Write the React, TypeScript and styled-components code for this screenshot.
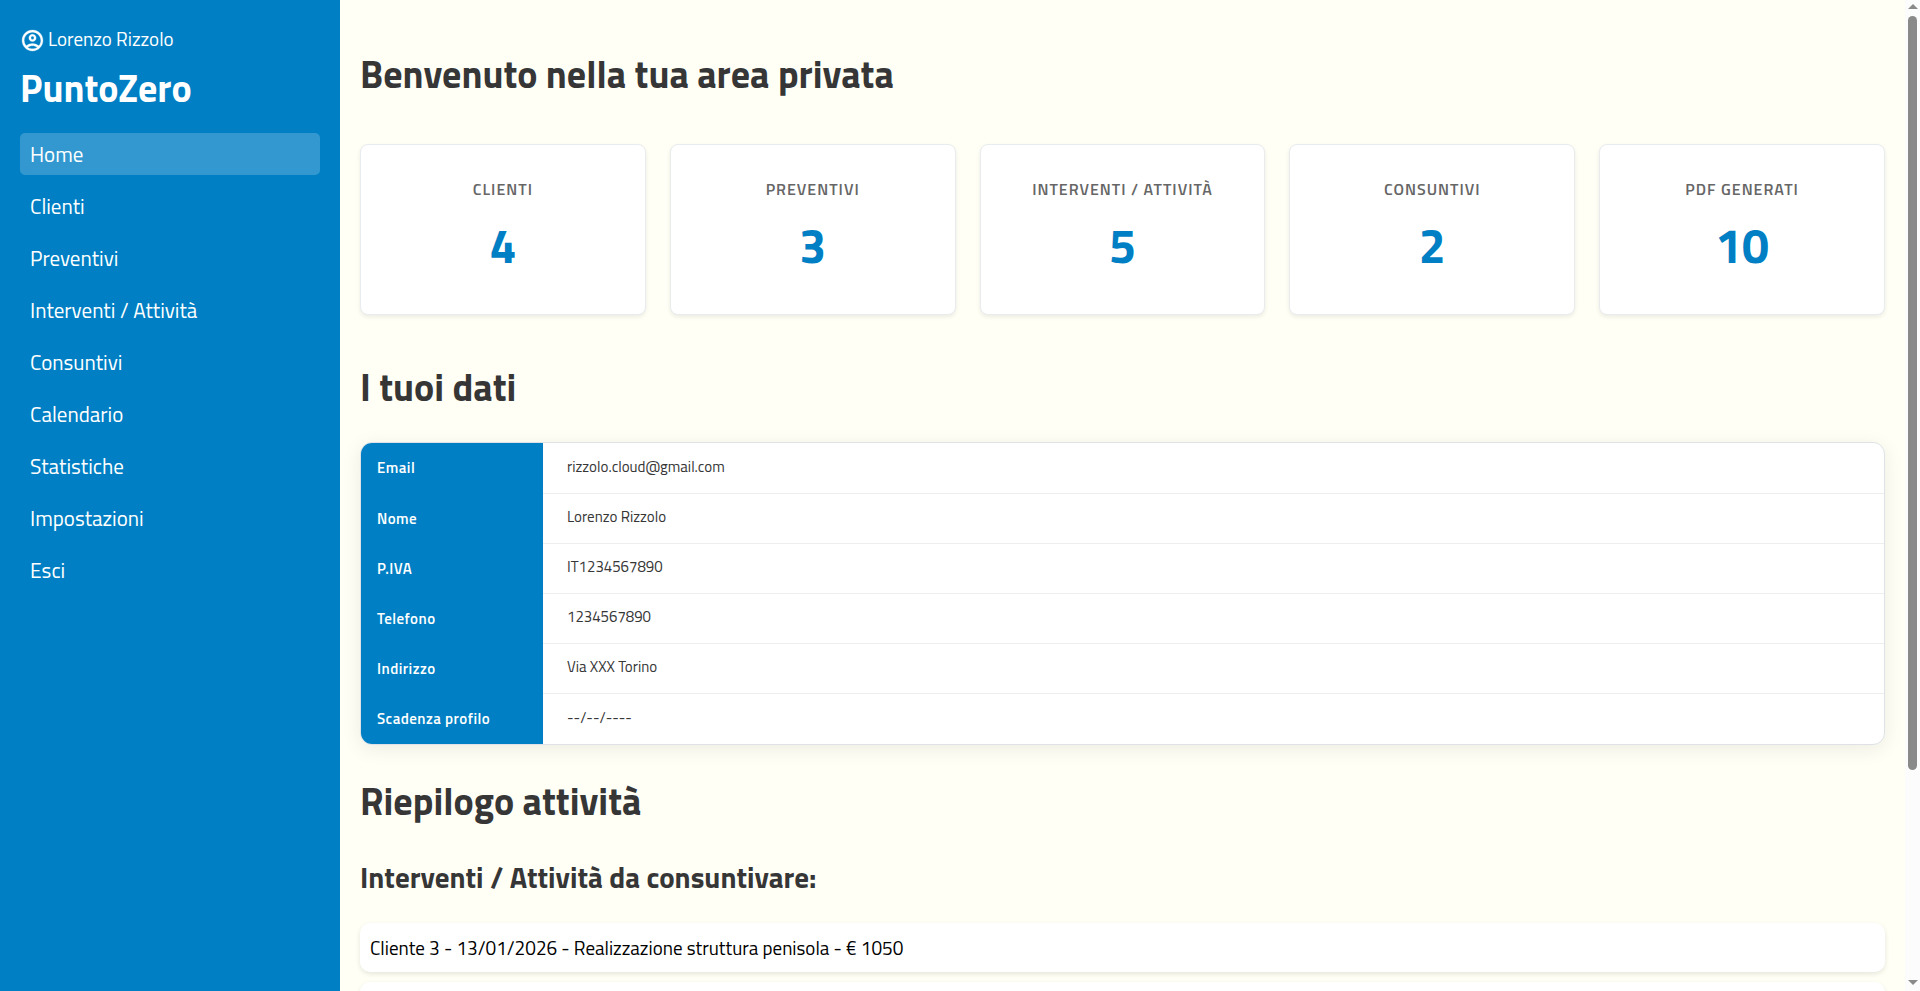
import React from "react";
import styled, { createGlobalStyle } from "styled-components";
import { MdOutlineAccountCircle } from "react-icons/md";

const GlobalStyle = createGlobalStyle`
  *, *::before, *::after { box-sizing: border-box; }
  body {
    margin: 0;
    background: #fffff6;
    color: #363636;
    font-family: "Titillium Web", Roboto, "Liberation Sans", sans-serif;
  }
`;

const Page = styled.div`
  display: grid;
  grid-template-columns: 340px minmax(0, 1fr) 15px;
  height: 100vh;
  overflow: hidden;
`;

const Sidebar = styled.aside`
  padding: 24px 20px;
  background: #007fc4;
  color: #fff;
`;

const User = styled.div`
  display: flex;
  align-items: center;
  gap: 3px;
  font-size: 19px;
  line-height: 30px;
`;

const UserIcon = styled(MdOutlineAccountCircle)`
  width: 25px;
  height: 25px;
  margin-top: 2px;

  path:not([fill="none"]) {
    stroke: currentColor;
    stroke-width: 0.3;
  }
`;

const Brand = styled.div`
  margin: 5px 0 16px;
  font-size: 38px;
  font-weight: 700;
  line-height: 58px;
`;

const Nav = styled.nav`
  display: flex;
  flex-direction: column;
  gap: 10px;
`;

const NavLink = styled.a<{ $active?: boolean }>`
  padding: 5px 10px;
  border-radius: 5px;
  background: ${(p) => (p.$active ? "rgba(255, 255, 255, 0.2)" : "transparent")};
  color: #fff;
  font-size: 21px;
  line-height: 32px;
  text-decoration: none;
`;

const Main = styled.main`
  min-width: 0;
  padding: 45px 20px 20px;
  overflow: hidden;
`;

const Title = styled.h1`
  margin: 0 0 41px;
  font-size: 38px;
  line-height: 58px;
`;

const SectionTitle = styled.h2`
  margin: 0 0 26px;
  font-size: 38px;
  line-height: 58px;
`;

const SubTitle = styled.h3`
  margin: 0 0 25px;
  font-size: 29px;
  line-height: 42px;
`;

const Cards = styled.div`
  display: grid;
  grid-template-columns: repeat(5, minmax(0, 1fr));
  gap: 24px;
  margin-bottom: 43px;
`;

const Card = styled.section`
  padding: 32px;
  border: 1px solid #e9ecef;
  border-radius: 8px;
  background: #fff;
  box-shadow: 0 2px 4px rgba(0, 0, 0, 0.08);
  text-align: center;
  white-space: nowrap;
`;

const CardLabel = styled.div`
  margin-bottom: 8px;
  color: #666;
  font-size: 16px;
  font-weight: 600;
  letter-spacing: 1px;
  line-height: 24px;
  text-transform: uppercase;
`;

const CardValue = styled.div`
  color: #007fc4;
  font-size: 48px;
  font-weight: 700;
  line-height: 73px;
`;

const TableFrame = styled.div`
  margin-bottom: 27px;
  overflow: hidden;
  border: 1px solid #dee2e6;
  border-radius: 12px;
  background: #fff;
  box-shadow: 0 4px 20px rgba(0, 0, 0, 0.08);
`;

const Table = styled.table`
  width: 100%;
  border-spacing: 0;
  font-size: 15px;
  line-height: 23px;
`;

const HeadCell = styled.th`
  width: 182px;
  height: 50px;
  padding: 0 16px 2px;
  background: #007fc4;
  color: #fff;
  font-weight: 600;
  letter-spacing: 0.03em;
  text-align: left;
  white-space: nowrap;

  tr:first-child > & { height: 51px; }
`;

const DataCell = styled.td`
  padding: 0 24px 4px;
  border-bottom: 1px solid #eee;

  tr:last-child > & { border-bottom: 0; }
`;

const List = styled.ul`
  display: flex;
  flex-direction: column;
  gap: 10px;
  margin: 0;
  padding: 0;
  list-style: none;
`;

const ListItem = styled.li`
  min-height: 49px;
  padding: 10px;
  border-radius: 10px;
  background: #fff;
  box-shadow: 0 2px 5px rgba(0, 0, 0, 0.1);
  color: #000;
  font-size: 19px;
  line-height: 29px;
`;

const ScrollTrack = styled.div`
  display: flex;
  flex-direction: column;
  align-items: center;
  padding: 4px 0 6px;
  background: #fcfcfc;
`;

const ScrollArrow = styled.span<{ $down?: boolean }>`
  border: 5px solid transparent;
  border-width: ${(p) => (p.$down ? "5px 5px 0" : "0 5px 5px")};
  border-color: ${(p) => (p.$down ? "#8a8a8a transparent transparent" : "transparent transparent #8a8a8a")};
`;

const ScrollRail = styled.div`
  flex: 1;
  width: 9px;
  margin: 7px 0 9px;
`;

const ScrollThumb = styled.div`
  height: 79%;
  border-radius: 5px;
  background: #8a8a8a;
`;

const navItems = [
  "Home",
  "Clienti",
  "Preventivi",
  "Interventi / Attività",
  "Consuntivi",
  "Calendario",
  "Statistiche",
  "Impostazioni",
  "Esci",
];

const stats: [string, number][] = [
  ["Clienti", 4],
  ["Preventivi", 3],
  ["Interventi / Attività", 5],
  ["Consuntivi", 2],
  ["PDF generati", 10],
];

const profile: [string, string][] = [
  ["Email", "rizzolo.cloud@gmail.com"],
  ["Nome", "Lorenzo Rizzolo"],
  ["P.IVA", "IT1234567890"],
  ["Telefono", "1234567890"],
  ["Indirizzo", "Via XXX Torino"],
  ["Scadenza profilo", "--/--/----"],
];

const activities = ["Cliente 3 - 13/01/2026 - Realizzazione struttura penisola - € 1050", ""];

export default function App() {
  return (
    <Page>
      <GlobalStyle />
      <Sidebar>
        <User>
          <UserIcon aria-hidden />
          Lorenzo Rizzolo
        </User>
        <Brand>PuntoZero</Brand>
        <Nav>
          {navItems.map((item, i) => (
            <NavLink key={item} href="#" $active={i === 0}>
              {item}
            </NavLink>
          ))}
        </Nav>
      </Sidebar>
      <Main>
        <Title>Benvenuto nella tua area privata</Title>
        <Cards>
          {stats.map(([label, value]) => (
            <Card key={label}>
              <CardLabel>{label}</CardLabel>
              <CardValue>{value}</CardValue>
            </Card>
          ))}
        </Cards>
        <SectionTitle>I tuoi dati</SectionTitle>
        <TableFrame>
          <Table>
            <tbody>
              {profile.map(([label, value]) => (
                <tr key={label}>
                  <HeadCell scope="row">{label}</HeadCell>
                  <DataCell>{value}</DataCell>
                </tr>
              ))}
            </tbody>
          </Table>
        </TableFrame>
        <SectionTitle>Riepilogo attività</SectionTitle>
        <SubTitle>Interventi / Attività da consuntivare:</SubTitle>
        <List>
          {activities.map((text, i) => (
            <ListItem key={i}>{text}</ListItem>
          ))}
        </List>
      </Main>
      <ScrollTrack aria-hidden>
        <ScrollArrow />
        <ScrollRail>
          <ScrollThumb />
        </ScrollRail>
        <ScrollArrow $down />
      </ScrollTrack>
    </Page>
  );
}
